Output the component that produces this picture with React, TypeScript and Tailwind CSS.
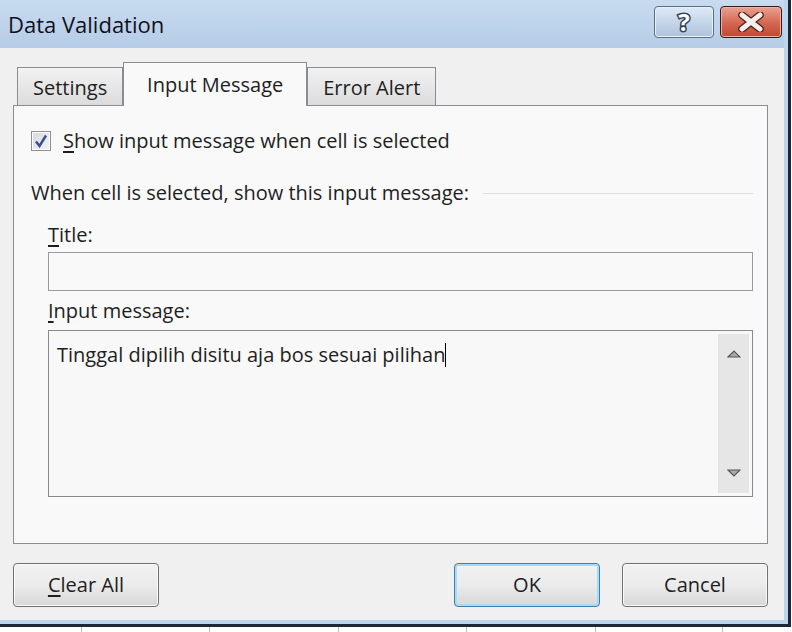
import React from 'react'

const font = { fontFamily: '"Open Sans", "Noto Sans", sans-serif' }

function Tab({ label, active }: { label: string; active?: boolean }) {
  if (active) {
    return (
      <div className="relative z-10 -mb-px flex h-[44px] w-[184px] items-center justify-center border border-b-0 border-[#898c95] bg-[#f9f9f9] pt-[1px] text-[#1e1e1e]">
        {label}
      </div>
    )
  }
  return (
    <div className="flex h-[38px] items-center justify-center border border-b-0 border-[#898c95] bg-gradient-to-b from-[#f2f2f2] to-[#dcdcdc] px-[15px] pt-[3px] text-[#1e1e1e]">
      {label}
    </div>
  )
}

function Btn({ children, primary }: { children: React.ReactNode; primary?: boolean }) {
  return (
    <button
      className={`flex h-[44px] w-[146px] items-center justify-center rounded-[4px] border ${
        primary ? 'border-[#3c7fb1] shadow-[inset_0_0_0_2px_#a8dcf5]' : 'border-[#707070] shadow-[inset_0_0_0_1px_#fbfbfb]'
      } bg-gradient-to-b from-[#f2f2f2] via-[#ebebeb] to-[#d8d8d8] text-[#1e1e1e]`}
    >
      {children}
    </button>
  )
}

export default function App() {
  return (
    <div style={font} className="flex h-[632px] w-[792px] flex-col overflow-hidden bg-white text-[20px] text-[#1e1e1e]">
      <div className="mr-[1px] flex h-[627px] flex-col border-r-[3px] border-b-[3px] border-[#1c2836]">
        <div className="flex flex-1 flex-col border-r-[4px] border-b-[4px] border-[#bcd5ec]">
          {/* title bar */}
          <div className="flex h-[48px] items-center justify-between bg-gradient-to-b from-[#c8dbef] to-[#b5cce7] pl-[8px] pr-[2px]">
            <span className="text-[22px] text-[#101020]">Data Validation</span>
            <div className="flex gap-[6px] pb-[4px]">
              <div className="flex h-[32px] w-[60px] items-center justify-center rounded-[4px] border border-[#5a6f88] bg-gradient-to-b from-[#dfe9f5] via-[#c5d6ea] to-[#aec2dc] shadow-[inset_0_0_0_1px_#e8f0f8]">
                <svg width="24" height="30" viewBox="0 0 24 30" className="overflow-visible">
                  <text
                    x="12"
                    y="24"
                    textAnchor="middle"
                    fontSize="24"
                    fontWeight="bold"
                    fontFamily="Open Sans, sans-serif"
                    fill="#ffffff"
                    stroke="#2f4258"
                    strokeWidth="3"
                    paintOrder="stroke"
                  >
                    ?
                  </text>
                </svg>
              </div>
              <div className="flex h-[32px] w-[62px] items-center justify-center rounded-[4px] border border-[#3b1510] bg-gradient-to-b from-[#e8a293] via-[#d46a55] to-[#c3452f] shadow-[inset_0_0_0_1px_#eab4a8]">
                <svg width="28" height="20" viewBox="0 0 28 20">
                  <path d="M5 3 L23 17 M23 3 L5 17" stroke="#4a231c" strokeWidth="7.5" strokeLinecap="round" />
                  <path d="M5 3 L23 17 M23 3 L5 17" stroke="#fbeeea" strokeWidth="5" strokeLinecap="round" />
                </svg>
              </div>
            </div>
          </div>

          {/* body */}
          <div className="flex flex-1 flex-col bg-[#f0f0f0] pl-[13px] pr-[16px] pt-[14px]">
            <div className="flex items-end pl-[4px]">
              <Tab label="Settings" />
              <Tab label="Input Message" active />
              <Tab label="Error Alert" />
            </div>
            <div className="flex h-[439px] flex-col border border-[#898c95] bg-[#f9f9f9] pl-[17px] pr-[14px]">
              <div className="mt-[20px] flex items-center gap-[12px]">
                <div className="flex h-[20px] w-[20px] items-center justify-center border border-[#8e8f8f] bg-gradient-to-br from-[#d6d8e0] to-[#f4f4f6] shadow-[inset_0_0_0_1px_#fff]">
                  <svg width="14" height="14" viewBox="0 0 14 14">
                    <path d="M2 7.5 L5.5 12 L12 1.5" stroke="#3a4e8c" strokeWidth="2.4" fill="none" />
                  </svg>
                </div>
                <span>
                  <span className="underline underline-offset-[3px]">S</span>how input message when cell is selected
                </span>
              </div>

              <div className="mt-[22px] flex items-center gap-[14px]">
                <span>When cell is selected, show this input message:</span>
                <div className="h-px flex-1 bg-[#d5dfe5]" />
              </div>

              <div className="flex flex-col pl-[17px]">
                <span className="mt-[12px]">
                  <span className="underline underline-offset-[3px]">T</span>itle:
                </span>
                <div className="mt-[2px] h-[39px] border border-[#9a9a9a] bg-[#f9f9f9]" />
                <span className="mt-[5px]">
                  <span className="underline underline-offset-[3px]">I</span>nput message:
                </span>
                <div className="mt-[4px] flex h-[167px] border border-[#8a8a8a] bg-[#f8f8f8] p-[3px]">
                  <div className="flex-1 pl-[5px] pt-[4px]">
                    <span>Tinggal dipilih disitu aja bos sesuai pilihan</span>
                    <span className="inline-block h-[24px] w-px translate-y-[5px] bg-black" />
                  </div>
                  <div className="flex w-[31px] flex-col items-center justify-between border-l border-[#e2e2e2] bg-[#e6e6e6] py-[16px]">
                    <svg width="14" height="8" viewBox="0 0 14 8">
                      <path d="M1 7 L7 1 L13 7 Z" fill="#aaa" stroke="#555" strokeWidth="1.2" />
                    </svg>
                    <svg width="14" height="8" viewBox="0 0 14 8">
                      <path d="M1 1 L7 7 L13 1 Z" fill="#aaa" stroke="#555" strokeWidth="1.2" />
                    </svg>
                  </div>
                </div>
              </div>
            </div>

            <div className="mt-[19px] flex items-center">
              <Btn>
                <span>
                  <span className="underline underline-offset-[3px]">C</span>lear All
                </span>
              </Btn>
              <div className="flex-1" />
              <Btn primary>OK</Btn>
              <div className="w-[22px]" />
              <Btn>Cancel</Btn>
            </div>
          </div>
        </div>
      </div>
      <div className="flex flex-1">
        <div className="w-[82px] border-r border-[#bbbbbb]" />
        <div className="w-[128px] border-r border-[#bbbbbb]" />
        <div className="w-[129px] border-r border-[#bbbbbb]" />
        <div className="w-[128px] border-r border-[#bbbbbb]" />
        <div className="w-[129px] border-r border-[#bbbbbb]" />
        <div className="w-[127px] border-r border-[#bbbbbb]" />
      </div>
    </div>
  )
}
